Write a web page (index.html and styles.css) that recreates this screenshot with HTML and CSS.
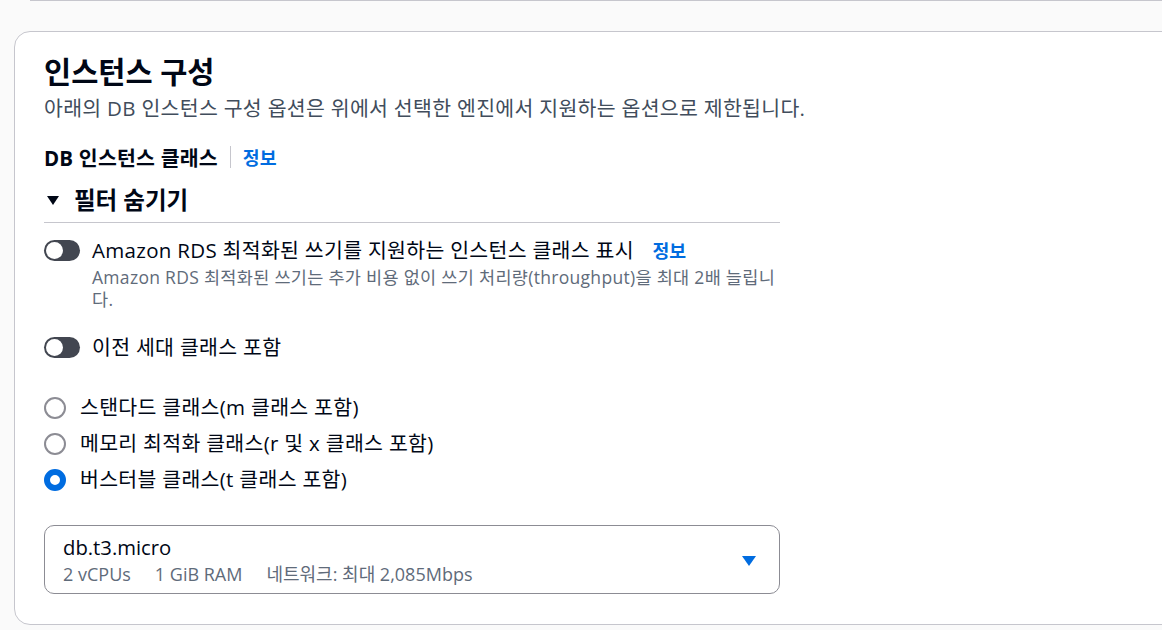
FILE: index.html
```html
<!DOCTYPE html>
<html lang="ko">
<head>
<meta charset="utf-8">
<link rel="stylesheet" href="styles.css">
</head>
<body>
<div class="prev-edge"></div>
<section class="card">
  <h2 class="title">인스턴스 구성</h2>
  <p class="desc">아래의 DB 인스턴스 구성 옵션은 위에서 선택한 엔진에서 지원하는 옵션으로 제한됩니다.</p>
  <div class="form">
    <div class="field-label">
      <span class="label-text">DB 인스턴스 클래스</span>
      <span class="sep"></span>
      <a class="info">정보</a>
    </div>
    <div class="expander">
      <svg class="caret" width="14" height="12" viewBox="0 0 14 12"><path d="M1 2h12L7 11z" fill="#000716"/></svg>
      <span>필터 숨기기</span>
    </div>
    <div class="filters">
      <div class="toggle-row">
        <span class="toggle"><span class="knob"></span></span>
        <div class="toggle-text">
          <div class="toggle-label">Amazon RDS 최적화된 쓰기를 지원하는 인스턴스 클래스 표시 <a class="info info-inline">정보</a></div>
          <div class="toggle-desc">Amazon RDS 최적화된 쓰기는 추가 비용 없이 쓰기 처리량(throughput)을 최대 2배 늘립니다.</div>
        </div>
      </div>
      <div class="toggle-row second">
        <span class="toggle"><span class="knob"></span></span>
        <div class="toggle-text">
          <div class="toggle-label">이전 세대 클래스 포함</div>
        </div>
      </div>
      <div class="radios">
        <div class="radio-row"><span class="radio"></span><span>스탠다드 클래스(m 클래스 포함)</span></div>
        <div class="radio-row"><span class="radio"></span><span>메모리 최적화 클래스(r 및 x 클래스 포함)</span></div>
        <div class="radio-row"><span class="radio checked"></span><span>버스터블 클래스(t 클래스 포함)</span></div>
      </div>
    </div>
    <div class="select">
      <div class="select-body">
        <div class="select-value">db.t3.micro</div>
        <div class="select-tags"><span>2 vCPUs</span><span>1 GiB RAM</span><span>네트워크: 최대 2,085Mbps</span></div>
      </div>
      <svg class="select-caret" width="16" height="12" viewBox="0 0 16 12"><path d="M1 1h14L8 11z" fill="#006ce0"/></svg>
    </div>
  </div>
</section>
</body>
</html>
```

FILE: styles.css
```css
html, body {
  margin: 0;
  padding: 0;
}
body {
  background: #fafafa;
  overflow: hidden;
  width: 1162px;
  height: 630px;
  font-family: "Open Sans", "Noto Sans CJK KR", sans-serif;
  color: #000716;
}
.prev-edge {
  margin-left: 30px;
  border-top: 1px solid #c6c6cd;
  height: 0;
}
.card {
  margin: 30px 0 0 14px;
  width: 1200px;
  height: 594px;
  box-sizing: border-box;
  background: #fff;
  border: 1px solid #c6c6cd;
  border-radius: 16px;
  padding: 22px 29px;
}
.title {
  margin: 0;
  font-size: 29.5px;
  line-height: 36px;
  font-weight: 700;
}
.desc {
  margin: 5px 0 0;
  font-size: 20.5px;
  letter-spacing: 0.3px;
  line-height: 26px;
  color: #414d5c;
}
.form {
  width: 736px;
}
.field-label {
  display: flex;
  align-items: center;
  margin-top: 22px;
  height: 28px;
  font-size: 20.5px;
  letter-spacing: 0.2px;
  font-weight: 700;
}
.sep {
  width: 1px;
  height: 22px;
  background: #c6c6cd;
  margin: 0 12px;
}
.info {
  color: #006ce0;
  font-weight: 700;
  font-size: 18.3px;
  letter-spacing: 0;
}
.expander {
  display: flex;
  align-items: center;
  gap: 14px;
  margin-top: 14px;
  padding: 0 2px 7px;
  font-size: 23.5px;
  font-weight: 700;
  line-height: 30px;
  border-bottom: 1px solid #c6c6cd;
}
.filters {
  padding-top: 14px;
}
.toggle-row {
  display: flex;
  gap: 12px;
  align-items: flex-start;
}
.toggle-row.second {
  margin-top: 24px;
}
.toggle {
  flex: none;
  width: 36px;
  height: 21px;
  margin-top: 3px;
  border-radius: 11px;
  background: #424650;
  display: flex;
  align-items: center;
  padding-left: 2px;
  box-sizing: border-box;
}
.knob {
  width: 17px;
  height: 17px;
  border-radius: 50%;
  background: #fff;
}
.toggle-label {
  font-size: 20.5px;
  letter-spacing: 0.3px;
  line-height: 27px;
}
.info-inline {
  margin-left: 13px;
}
.toggle-desc {
  margin-top: 2px;
  font-size: 17.5px;
  letter-spacing: 0.3px;
  line-height: 22px;
  color: #5f6b7a;
}
.radios {
  margin-top: 33px;
  display: flex;
  flex-direction: column;
  gap: 9px;
}
.radio-row {
  display: flex;
  align-items: center;
  gap: 14px;
  font-size: 20.5px;
  letter-spacing: 0.3px;
  line-height: 27px;
}
.radio {
  flex: none;
  width: 22px;
  height: 22px;
  box-sizing: border-box;
  border: 2px solid #8c8c94;
  border-radius: 50%;
}
.radio.checked {
  border: 6px solid #006ce0;
}
.select {
  margin-top: 32px;
  display: flex;
  align-items: center;
  border: 1px solid #8c8c94;
  border-radius: 10px;
  padding: 8px 22px 7px 18px;
}
.select-body {
  flex: 1;
}
.select-value {
  font-size: 20.25px;
  line-height: 26px;
}
.select-tags {
  margin-top: 2px;
  display: flex;
  gap: 24px;
  font-size: 18px;
  line-height: 24px;
  color: #5f6b7a;
}
.select-caret {
  margin-top: 2px;
}
```
